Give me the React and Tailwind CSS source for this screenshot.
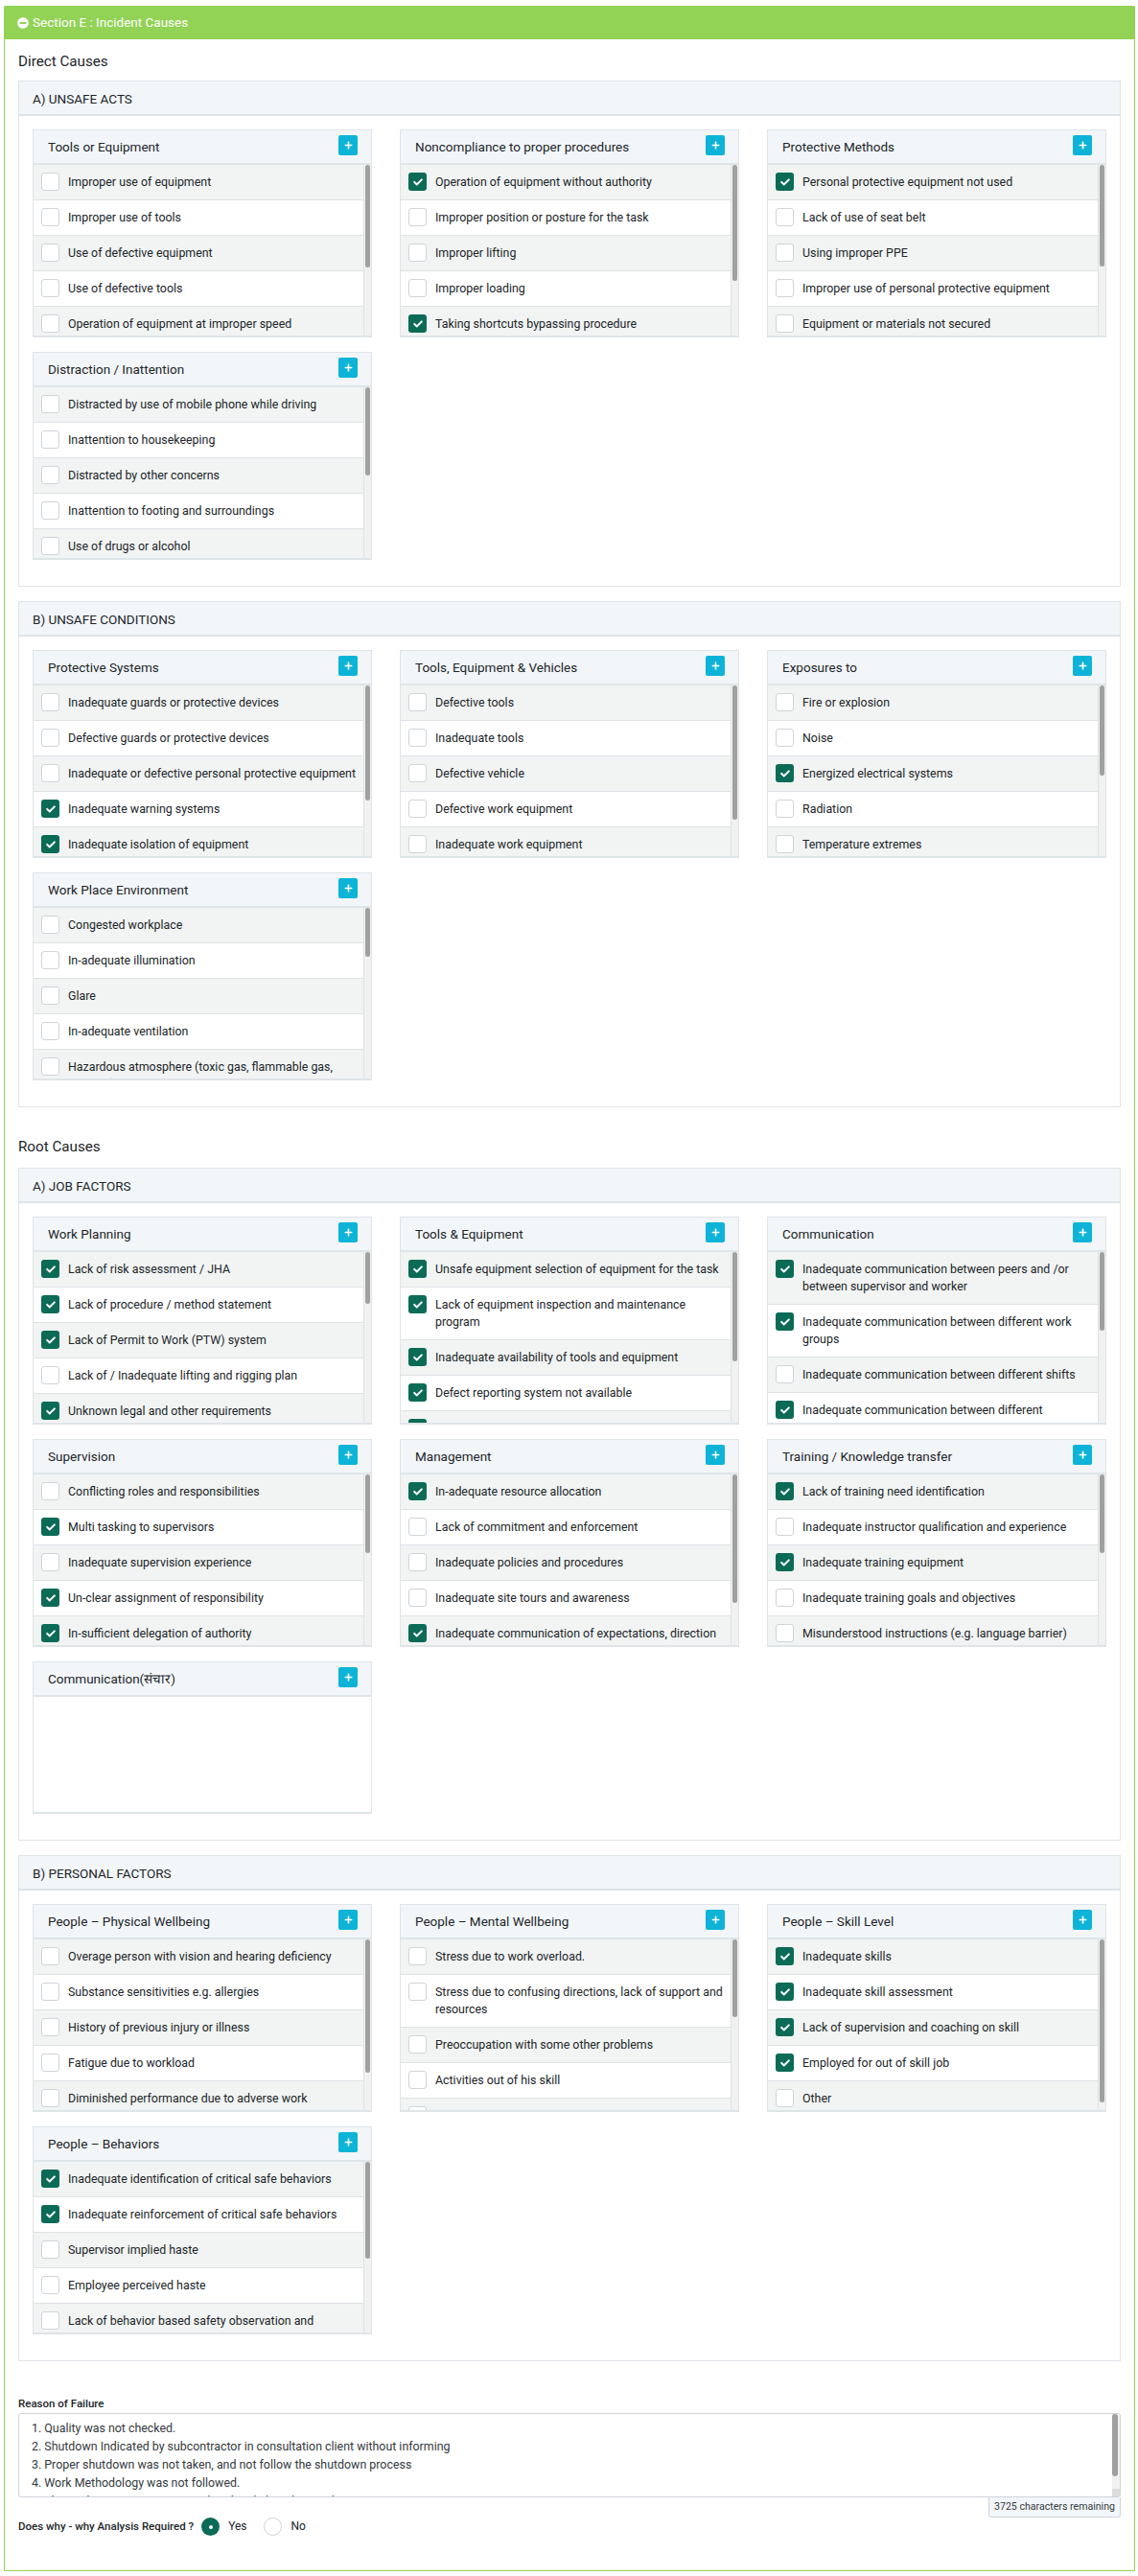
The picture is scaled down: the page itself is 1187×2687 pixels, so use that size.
import { FaPlus, FaCheck, FaMinusCircle } from 'react-icons/fa';

// [label, checked]
const unsafeActs = [
  { title: 'Tools or Equipment', thumb: 107, items: [['Improper use of equipment'], ['Improper use of tools'], ['Use of defective equipment'], ['Use of defective tools'], ['Operation of equipment at improper speed']] },
  { title: 'Noncompliance to proper procedures', thumb: 121, items: [['Operation of equipment without authority', 1], ['Improper position or posture for the task'], ['Improper lifting'], ['Improper loading'], ['Taking shortcuts bypassing procedure', 1]] },
  { title: 'Protective Methods', thumb: 106, items: [['Personal protective equipment not used', 1], ['Lack of use of seat belt'], ['Using improper PPE'], ['Improper use of personal protective equipment'], ['Equipment or materials not secured']] },
  { title: 'Distraction / Inattention', thumb: 92, items: [['Distracted by use of mobile phone while driving'], ['Inattention to housekeeping'], ['Distracted by other concerns'], ['Inattention to footing and surroundings'], ['Use of drugs or alcohol']] },
];

const unsafeConditions = [
  { title: 'Protective Systems', thumb: 120, items: [['Inadequate guards or protective devices'], ['Defective guards or protective devices'], ['Inadequate or defective personal protective equipment'], ['Inadequate warning systems', 1], ['Inadequate isolation of equipment', 1]] },
  { title: 'Tools, Equipment & Vehicles', thumb: 140, items: [['Defective tools'], ['Inadequate tools'], ['Defective vehicle'], ['Defective work equipment'], ['Inadequate work equipment']] },
  { title: 'Exposures to', thumb: 94, items: [['Fire or explosion'], ['Noise'], ['Energized electrical systems', 1], ['Radiation'], ['Temperature extremes']] },
  { title: 'Work Place Environment', thumb: 51, items: [['Congested workplace'], ['In-adequate illumination'], ['Glare'], ['In-adequate ventilation'], ['Hazardous atmosphere (toxic gas, flammable gas, vapours)']] },
];

const jobFactors = [
  { title: 'Work Planning', thumb: 54, items: [['Lack of risk assessment / JHA', 1], ['Lack of procedure / method statement', 1], ['Lack of Permit to Work (PTW) system', 1], ['Lack of / Inadequate lifting and rigging plan'], ['Unknown legal and other requirements', 1]] },
  { title: 'Tools & Equipment', thumb: 114, items: [['Unsafe equipment selection of equipment for the task', 1], ['Lack of equipment inspection and maintenance program', 1], ['Inadequate availability of tools and equipment', 1], ['Defect reporting system not available', 1], ['Need appropriate tools or equipment', 1]] },
  { title: 'Communication', thumb: 82, items: [['Inadequate communication between peers and /or between supervisor and worker', 1], ['Inadequate communication between different work groups', 1], ['Inadequate communication between different shifts'], ['Inadequate communication between different contractors', 1]] },
  { title: 'Supervision', thumb: 82, items: [['Conflicting roles and responsibilities'], ['Multi tasking to supervisors', 1], ['Inadequate supervision experience'], ['Un-clear assignment of responsibility', 1], ['In-sufficient delegation of authority', 1]] },
  { title: 'Management', thumb: 134, items: [['In-adequate resource allocation', 1], ['Lack of commitment and enforcement'], ['Inadequate policies and procedures'], ['Inadequate site tours and awareness'], ['Inadequate communication of expectations, direction', 1]] },
  { title: 'Training / Knowledge transfer', thumb: 82, items: [['Lack of training need identification', 1], ['Inadequate instructor qualification and experience'], ['Inadequate training equipment', 1], ['Inadequate training goals and objectives'], ['Misunderstood instructions (e.g. language barrier)']] },
  { title: 'Communication(संचार)', empty: true },
];

const personalFactors = [
  { title: 'People – Physical Wellbeing', thumb: 139, items: [['Overage person with vision and hearing deficiency'], ['Substance sensitivities e.g. allergies'], ['History of previous injury or illness'], ['Fatigue due to workload'], ['Diminished performance due to adverse work']] },
  { title: 'People – Mental Wellbeing', thumb: 81, items: [['Stress due to work overload.'], ['Stress due to confusing directions, lack of support and resources'], ['Preoccupation with some other problems'], ['Activities out of his skill'], ['Inappropriate work schedule']] },
  { title: 'People – Skill Level', thumb: 170, items: [['Inadequate skills', 1], ['Inadequate skill assessment', 1], ['Lack of supervision and coaching on skill', 1], ['Employed for out of skill job', 1], ['Other']] },
  { title: 'People – Behaviors', thumb: 101, items: [['Inadequate identification of critical safe behaviors', 1], ['Inadequate reinforcement of critical safe behaviors', 1], ['Supervisor implied haste'], ['Employee perceived haste'], ['Lack of behavior based safety observation and']] },
];

function CheckBox({ checked }) {
  if (checked) {
    return (
      <span className="flex h-[19px] w-[19px] shrink-0 items-center justify-center rounded-[3px] bg-[#0b6b56] text-white">
        <FaCheck className="h-[10px] w-[10px]" />
      </span>
    );
  }
  return <span className="block h-[19px] w-[19px] shrink-0 rounded-[3px] border border-[#ced4da] bg-white" />;
}

function CauseCard({ card }) {
  return (
    <div className="border border-b-2 border-[#dfe4e7] bg-white">
      <div className="flex h-[36px] items-start justify-between border-b-2 border-[#e0e5e8] bg-[#f3f6f9] pl-[15px] pr-[14px]">
        <span className="mt-[9px] text-[13.5px] leading-[17px] text-[#212529]">{card.title}</span>
        <button className="mt-[5px] flex h-[21px] w-[20px] items-center justify-center rounded-[2px] bg-[#0db4d8] text-white">
          <FaPlus className="h-[9px] w-[9px]" />
        </button>
      </div>
      {card.empty ? (
        <div className="h-[120px]" />
      ) : (
        <div className="flex h-[178px] overflow-hidden">
          <div className="min-w-0 flex-1">
            {card.items.map(([label, checked], i) => (
              <div key={label} className={`flex gap-[9px] border-b border-[#dee2e6] py-[9px] pl-[8px] pr-[6px] ${i % 2 === 0 ? 'bg-[#f1f4f3]' : 'bg-white'}`}>
                <div className="-my-px">
                  <CheckBox checked={checked} />
                </div>
                <span className="text-[12.4px] leading-[18px] text-[#212529]">{label}</span>
              </div>
            ))}
          </div>
          <div className="w-[8px] shrink-0 border-l border-[#dee2e6] bg-[#f1f1f1] pl-px">
            <div className="w-[5px] rounded-[3px] bg-[#a0a0a0]" style={{ height: card.thumb }} />
          </div>
        </div>
      )}
    </div>
  );
}

function Panel({ title, cards }) {
  return (
    <div className="mb-[15px] border border-[#dfe4e7] bg-white">
      <div className="h-[36px] border-b-2 border-[#dfe3e6] bg-[#f3f6f9] px-[14px] pt-[10px] text-[13.5px] leading-[16px] text-[#212529]">{title}</div>
      <div className="grid grid-cols-3 gap-x-[29px] gap-y-[15px] pb-[27px] pl-[14px] pr-[14px] pt-[14px]">
        {cards.map((c) => (
          <CauseCard key={c.title} card={c} />
        ))}
      </div>
    </div>
  );
}

export default function App() {
  return (
    <div className="min-h-[2687px] bg-white pl-[4px] pr-[3px] pt-[6px] font-['Roboto',sans-serif] text-[#212529]">
      <div className="h-[2676px] rounded-t-[2px] border border-[#92d255] bg-white">
        <div className="-mx-px -mt-px flex h-[35px] items-center gap-[4px] rounded-t-[2px] bg-[#92d255] pl-[14px] text-[13.5px] text-white">
          <FaMinusCircle className="h-[12px] w-[12px]" />
          <span>Section E : Incident Causes</span>
        </div>
        <div className="px-[14px]">
          <h3 className="h-[43px] pt-[13px] text-[15.2px] leading-[20px]">Direct Causes</h3>
          <Panel title="A) UNSAFE ACTS" cards={unsafeActs} />
          <Panel title="B) UNSAFE CONDITIONS" cards={unsafeConditions} />
          <h3 className="h-[48px] pt-[16px] text-[15.2px] leading-[20px]">Root Causes</h3>
          <Panel title="A) JOB FACTORS" cards={jobFactors} />
          <Panel title="B) PERSONAL FACTORS" cards={personalFactors} />

          <label className="mt-[37px] block text-[11.5px] font-medium leading-[14px]">Reason of Failure</label>
          <div className="relative mt-[3px]">
            <div className="flex h-[88px] overflow-hidden rounded-[3px] border border-[#ced4da] bg-white">
              <div className="flex-1 px-[13px] pt-[5px] text-[12.4px] leading-[19px] text-[#343a40]">
                <div>1. Quality was not checked.</div>
                <div>2. Shutdown Indicated by subcontractor in consultation client without informing</div>
                <div>3. Proper shutdown was not taken, and not follow the shutdown process</div>
                <div>4. Work Methodology was not followed.</div>
                <div>5. The work permit was not completed and closed properly</div>
              </div>
              <div className="flex w-[8px] shrink-0 flex-col justify-between bg-[#f1f1f1]">
                <div className="h-[65px] w-[6px] rounded-[3px] bg-[#a0a0a0]" />
                <div className="h-[8px] bg-[#dcdcdc]" />
              </div>
            </div>
            <div className="absolute right-0 top-full rounded-b-[3px] border border-t-0 border-[#ced4da] bg-[#f3f6f9] px-[5px] py-[3px] text-[10.6px] leading-[14px] text-[#343a40]">
              3725 characters remaining
            </div>
          </div>

          <div className="mt-[21px] flex items-center text-[12px] leading-[19px]">
            <span className="text-[11.5px] font-medium">Does why - why Analysis Required ?</span>
            <span className="ml-[8px] flex h-[19px] w-[19px] items-center justify-center rounded-full bg-[#0b6b56]">
              <span className="h-[4px] w-[4px] rounded-full bg-white" />
            </span>
            <span className="ml-[9px]">Yes</span>
            <span className="ml-[17px] h-[19px] w-[19px] rounded-full border border-[#ced4da] bg-white" />
            <span className="ml-[10px]">No</span>
          </div>
        </div>
      </div>
    </div>
  );
}
